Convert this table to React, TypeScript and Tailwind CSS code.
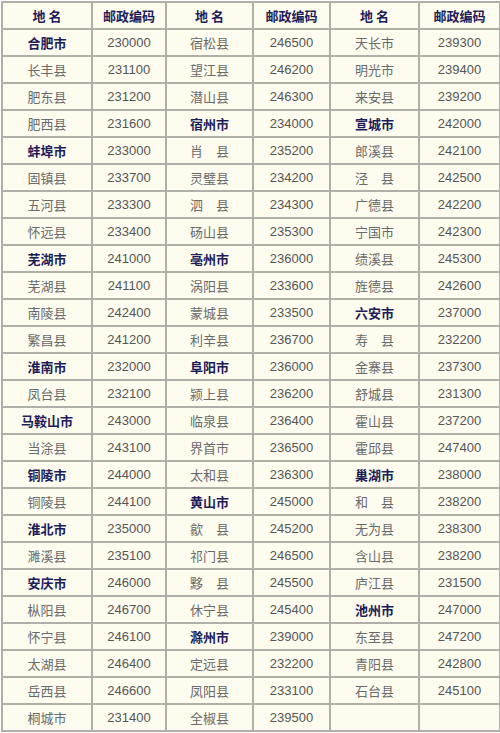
import React from 'react'

const rows: [string, string, string, string, string, string][] = [
  ['合肥市', '230000', '宿松县', '246500', '天长市', '239300'],
  ['长丰县', '231100', '望江县', '246200', '明光市', '239400'],
  ['肥东县', '231200', '潜山县', '246300', '来安县', '239200'],
  ['肥西县', '231600', '宿州市', '234000', '宣城市', '242000'],
  ['蚌埠市', '233000', '肖　县', '235200', '郎溪县', '242100'],
  ['固镇县', '233700', '灵璧县', '234200', '泾　县', '242500'],
  ['五河县', '233300', '泗　县', '234300', '广德县', '242200'],
  ['怀远县', '233400', '砀山县', '235300', '宁国市', '242300'],
  ['芜湖市', '241000', '亳州市', '236000', '绩溪县', '245300'],
  ['芜湖县', '241100', '涡阳县', '233600', '旌德县', '242600'],
  ['南陵县', '242400', '蒙城县', '233500', '六安市', '237000'],
  ['繁昌县', '241200', '利辛县', '236700', '寿　县', '232200'],
  ['淮南市', '232000', '阜阳市', '236000', '金寨县', '237300'],
  ['凤台县', '232100', '颍上县', '236200', '舒城县', '231300'],
  ['马鞍山市', '243000', '临泉县', '236400', '霍山县', '237200'],
  ['当涂县', '243100', '界首市', '236500', '霍邱县', '247400'],
  ['铜陵市', '244000', '太和县', '236300', '巢湖市', '238000'],
  ['铜陵县', '244100', '黄山市', '245000', '和　县', '238200'],
  ['淮北市', '235000', '歙　县', '245200', '无为县', '238300'],
  ['濉溪县', '235100', '祁门县', '246500', '含山县', '238200'],
  ['安庆市', '246000', '黟　县', '245500', '庐江县', '231500'],
  ['枞阳县', '246700', '休宁县', '245400', '池州市', '247000'],
  ['怀宁县', '246100', '滁州市', '239000', '东至县', '247200'],
  ['太湖县', '246400', '定远县', '232200', '青阳县', '242800'],
  ['岳西县', '246600', '凤阳县', '233100', '石台县', '245100'],
  ['桐城市', '231400', '全椒县', '239500', '', ''],
]

const bold = new Set([
  '合肥市', '宿州市', '宣城市', '蚌埠市', '芜湖市', '亳州市', '六安市', '淮南市', '阜阳市',
  '马鞍山市', '铜陵市', '巢湖市', '黄山市', '淮北市', '安庆市', '池州市', '滁州市',
])

const cell = 'border-2 border-[#b0b0a8] text-center align-middle p-0'

function Name({ text }: { text: string }) {
  if (bold.has(text)) {
    return (
      <td className={`${cell} text-[13px] font-bold text-[#1d1d5a] font-['Noto_Sans_CJK_SC',sans-serif]`}>
        {text}
      </td>
    )
  }
  return (
    <td className={`${cell} text-[13px] text-[#6a6a6a] font-['Noto_Sans_CJK_SC',sans-serif]`}>
      {text}
    </td>
  )
}

function Code({ text }: { text: string }) {
  return (
    <td className={`${cell} text-[13px] text-[#555555] font-['Liberation_Sans',sans-serif]`}>
      {text}
    </td>
  )
}

export default function App() {
  return (
    <div className="w-[500px] h-[733px] bg-white pl-[1px] pt-[1px]">
      <table className="table-fixed border-collapse w-[498px] bg-[#fdfcef]">
        <colgroup>
          <col className="w-[90px]" />
          <col className="w-[74px]" />
          <col className="w-[87px]" />
          <col className="w-[77px]" />
          <col className="w-[89px]" />
          <col className="w-[81px]" />
        </colgroup>
        <thead>
          <tr className="h-[27px]">
            {['地 名', '邮政编码', '地 名', '邮政编码', '地 名', '邮政编码'].map((h, i) => (
              <th
                key={i}
                className={`${cell} text-[13px] font-bold text-[#1d1d5a] font-['Noto_Sans_CJK_SC',sans-serif] whitespace-pre`}
              >
                {h}
              </th>
            ))}
          </tr>
        </thead>
        <tbody>
          {rows.map((r, i) => (
            <tr key={i} className="h-[27px]">
              <Name text={r[0]} />
              <Code text={r[1]} />
              <Name text={r[2]} />
              <Code text={r[3]} />
              <Name text={r[4]} />
              <Code text={r[5]} />
            </tr>
          ))}
        </tbody>
      </table>
    </div>
  )
}
